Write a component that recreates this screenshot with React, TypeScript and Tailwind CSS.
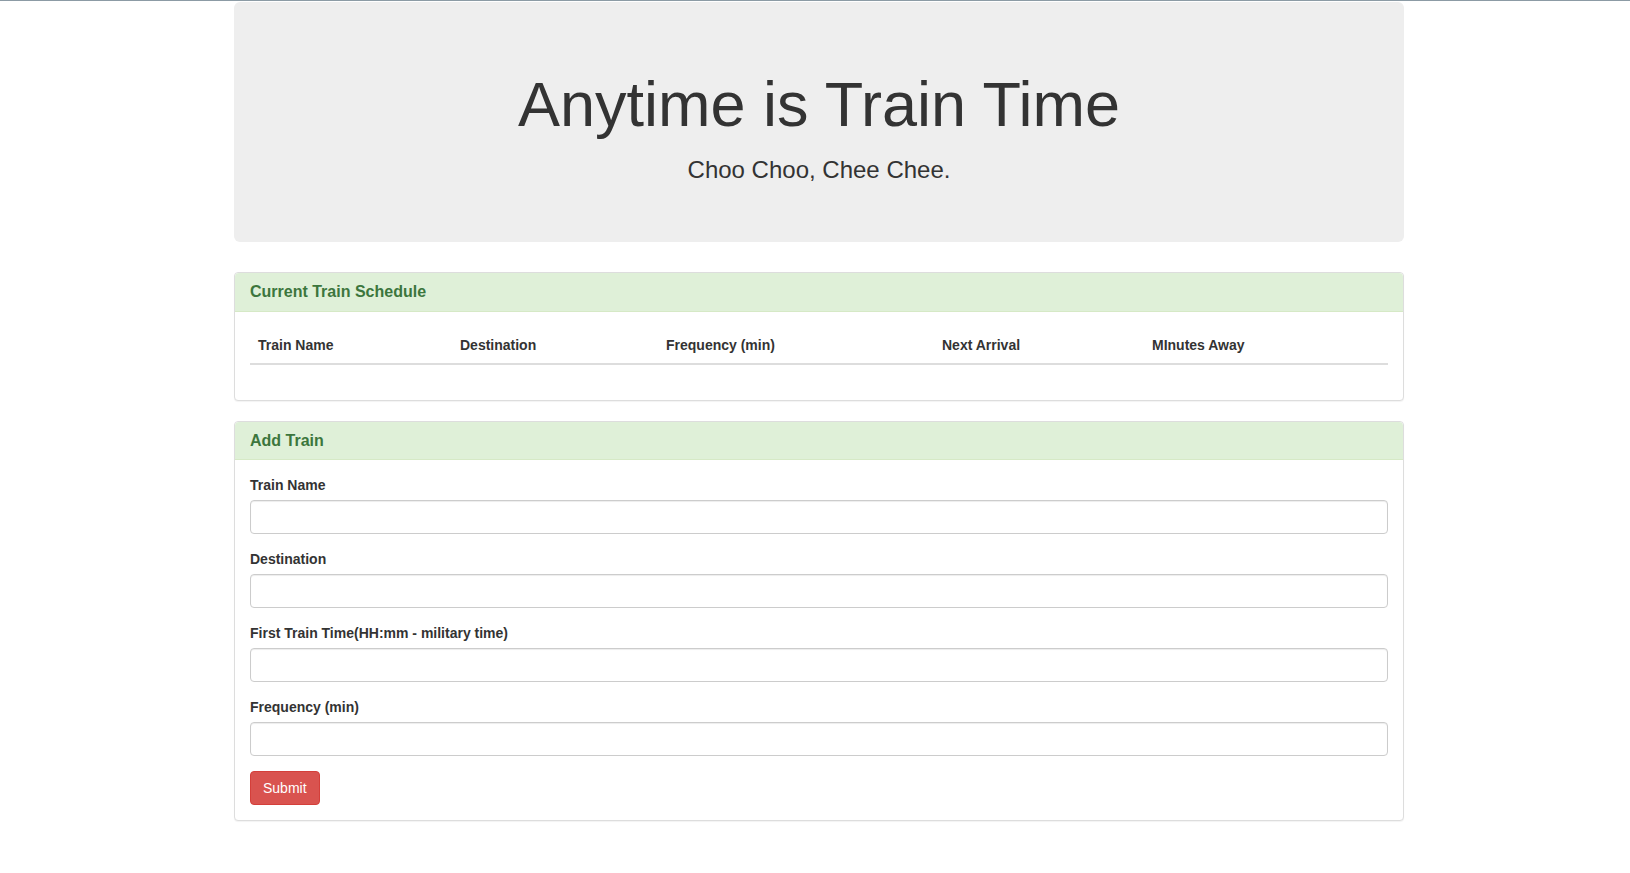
import React from "react"

const columns = [
  { label: "Train Name", width: "w-[202px]" },
  { label: "Destination", width: "w-[206px]" },
  { label: "Frequency (min)", width: "w-[276px]" },
  { label: "Next Arrival", width: "w-[210px]" },
  { label: "MInutes Away", width: "w-[244px]" },
]

const fields = [
  { id: "train-name", label: "Train Name" },
  { id: "destination", label: "Destination" },
  { id: "first-train", label: "First Train Time(HH:mm - military time)" },
  { id: "frequency", label: "Frequency (min)" },
]

function Panel({ title, children }: { title: string; children: React.ReactNode }) {
  return (
    <div className="mb-5 rounded border border-[#ddd] bg-white shadow-[0_1px_1px_rgba(0,0,0,0.05)]">
      <div className="rounded-t border-b border-[#d6e9c6] bg-[#dff0d8] px-[15px] py-[10px]">
        <h3 className="text-[16px] font-bold leading-[1.1] text-[#3c763d]">{title}</h3>
      </div>
      <div className="p-[15px]">{children}</div>
    </div>
  )
}

export default function App() {
  return (
    <div className="min-h-screen border-t border-[#8c9ba5] bg-white font-['Liberation_Sans',Arial,sans-serif] text-[14px] leading-[20px] text-[#333]">
      <div className="ml-[234px] w-[1170px] pt-px">
        {/* header */}
        <div className="mb-[30px] rounded-[6px] bg-[#eee] px-[60px] pt-[48px] pb-[48px] text-center">
          <h1 className="mt-5 mb-[14px] text-[63px] font-medium leading-[1.1]">Anytime is Train Time</h1>
          <p className="mb-[7px] text-[24px] leading-[34px]">Choo Choo, Chee Chee.</p>
        </div>

        <Panel title="Current Train Schedule">
          <table className="mb-5 w-full border-collapse">
            <thead>
              <tr>
                {columns.map((col) => (
                  <th
                    key={col.label}
                    className={`${col.width} border-b-2 border-[#ddd] p-2 text-left align-bottom font-bold leading-[20px]`}
                  >
                    {col.label}
                  </th>
                ))}
              </tr>
            </thead>
            <tbody></tbody>
          </table>
        </Panel>

        <Panel title="Add Train">
          <form onSubmit={(e) => e.preventDefault()}>
            {fields.map((f) => (
              <div key={f.id} className="mb-[15px]">
                <label htmlFor={f.id} className="mb-[5px] inline-block font-bold">
                  {f.label}
                </label>
                <input
                  id={f.id}
                  type="text"
                  className="block h-[34px] w-full rounded border border-[#ccc] bg-white px-3 py-1.5 shadow-[inset_0_1px_1px_rgba(0,0,0,0.075)] outline-none"
                />
              </div>
            ))}
            <button
              type="submit"
              className="rounded border border-[#d43f3a] bg-[#d9534f] px-3 py-1.5 text-[14px] leading-[20px] text-white"
            >
              Submit
            </button>
          </form>
        </Panel>
      </div>
    </div>
  )
}
